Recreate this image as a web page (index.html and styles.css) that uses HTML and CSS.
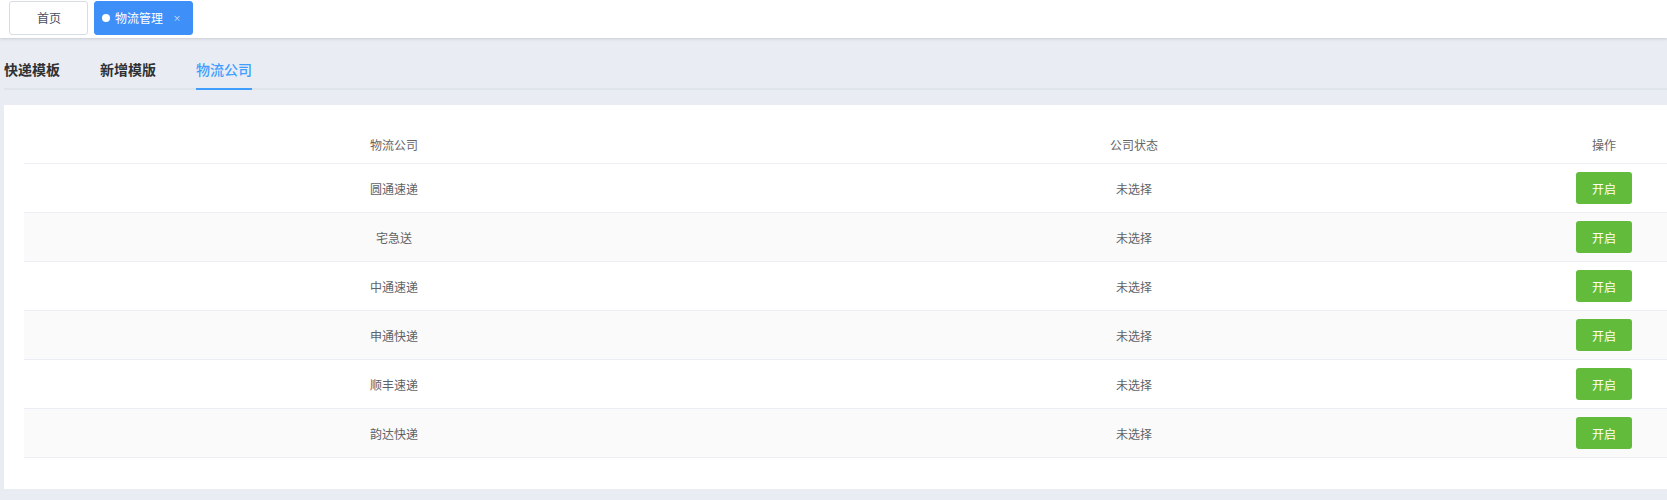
FILE: index.html
```html
<!DOCTYPE html>
<html>
<head>
    <title>物流管理</title>
    <link rel="stylesheet" href="styles.css">
</head>
<body>
    <div class="tags-view">
        <span class="tag">首页</span>
        <span class="tag active"><i class="dot"></i>物流管理<span class="close">×</span></span>
    </div>

    <div class="main">
        <div class="tabs">
            <div class="tab">快递模板</div>
            <div class="tab">新增模版</div>
            <div class="tab current">物流公司</div>
        </div>

        <div class="card">
            <table class="table">
                <colgroup>
                    <col style="width: 740px">
                    <col style="width: 740px">
                    <col style="width: 200px">
                </colgroup>
                <thead>
                    <tr><th>物流公司</th><th>公司状态</th><th>操作</th></tr>
                </thead>
                <tbody id="rows"></tbody>
            </table>
        </div>
    </div>

    <script>
        const companies = ['圆通速递', '宅急送', '中通速递', '申通快递', '顺丰速递', '韵达快递'];
        const rows = document.getElementById('rows');

        companies.forEach(function (name, i) {
            const tr = document.createElement('tr');
            if (i % 2 === 1) tr.className = 'striped';
            tr.innerHTML = '<td>' + name + '</td><td>未选择</td>' +
                '<td><button class="btn-success">开启</button></td>';
            rows.appendChild(tr);
        });
    </script>
</body>
</html>
```

FILE: styles.css
```css
body { margin: 0; background: #e9edf3; font-family: "Noto Sans CJK SC", "Noto Sans", sans-serif; overflow: hidden; }

.tags-view { height: 37px; background: #fff; display: flex; align-items: flex-start; gap: 6px; padding: 1px 9px 0; box-shadow: 0 1px 3px rgba(0,0,0,.12), 0 0 3px rgba(0,0,0,.04); }
.tag { height: 32px; line-height: 32px; border: 1px solid #d8dce5; border-radius: 3px; font-size: 12px; color: #495060; padding: 0 26px 0 27px; background: #fff; }
.tag.active { background: #3f8ff9; border-color: #3f8ff9; color: #fff; padding: 0 11px 0 7px; display: flex; align-items: center; }
.dot { width: 8px; height: 8px; border-radius: 50%; background: #fff; margin-right: 5px; }
.close { font-size: 8px; margin-left: 10px; opacity: .8; }

.main { padding: 12px 0 0 4px; width: 1720px; }

.tabs { display: flex; height: 40px; box-shadow: inset 0 -2px 0 #dfe3ea; margin-bottom: 15px; }
.tab { height: 40px; line-height: 38px; padding: 0 20px; font-size: 14px; font-weight: 600; color: #303133; }
.tab:first-child { padding-left: 0; }
.tab.current { color: #409eff; font-weight: 500; box-shadow: inset 0 -2px 0 #409eff; padding: 0; margin: 0 20px; }

.card { background: #fff; padding: 21px 20px 31px; }

.table { border-collapse: collapse; table-layout: fixed; width: 1680px; font-size: 12px; color: #606266; }
.table th { font-weight: normal; color: #666; padding: 12px 0; height: 13px; line-height: 13px; border-bottom: 1px solid #ebeef5; text-align: center; }
.table td { padding: 8px 0; height: 32px; border-bottom: 1px solid #ebeef5; text-align: center; }
.table tr.striped td { background: #fafafa; }

.btn-success { width: 56px; height: 32px; border: none; border-radius: 3px; background: #63bb3b; color: #fff; font-size: 12px; font-family: inherit; padding: 0; }
```
